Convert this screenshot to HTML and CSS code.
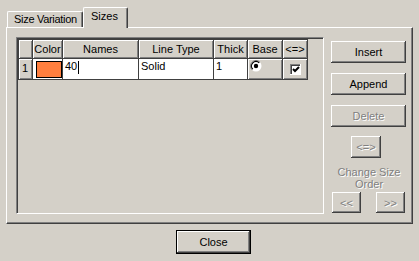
FILE: index.html
```html
<!DOCTYPE html>
<html lang="en">
<head>
    <meta charset="UTF-8">
    <title>Sizes</title>
    <link rel="stylesheet" href="styles.css">
</head>
<body>
    <div class="dialog">
        <div class="tabs">
            <div class="tab">Size Variation</div>
            <div class="tab active">Sizes</div>
        </div>
        <div class="panel">
            <div class="well">
                <div class="grid">
                    <div class="hd"></div>
                    <div class="hd">Color</div>
                    <div class="hd">Names</div>
                    <div class="hd">Line Type</div>
                    <div class="hd">Thick</div>
                    <div class="hd">Base</div>
                    <div class="hd">&lt;=&gt;</div>

                    <div class="hd rowhd">1</div>
                    <div class="cell color"><span class="swatch"></span></div>
                    <div class="cell">40<span class="caret"></span></div>
                    <div class="cell">Solid</div>
                    <div class="cell">1</div>
                    <div class="hd base">
                        <svg width="12" height="12" viewBox="0 0 12 12">
                            <circle cx="6" cy="6" r="5.5" fill="#fff"/>
                            <path d="M2.1 9.9 A5.5 5.5 0 0 1 9.9 2.1" fill="none" stroke="#808080" stroke-width="1"/>
                            <path d="M2.8 9.2 A4.5 4.5 0 0 1 9.2 2.8" fill="none" stroke="#000" stroke-width="1.2"/>
                            <circle cx="6" cy="6" r="2.2" fill="#000"/>
                        </svg>
                    </div>
                    <div class="hd order">
                        <svg width="11" height="11" viewBox="0 0 11 11">
                            <rect x="0" y="0" width="11" height="11" fill="#fff"/>
                            <rect x="0" y="0" width="10" height="10" fill="#808080"/>
                            <rect x="1" y="1" width="9" height="9" fill="#404040"/>
                            <rect x="2" y="2" width="8" height="8" fill="#fff"/>
                            <path d="M3 5 L5 7 L9 3" fill="none" stroke="#000" stroke-width="2"/>
                        </svg>
                    </div>
                </div>
            </div>
            <div class="side">
                <button class="btn wide">Insert</button>
                <button class="btn wide">Append</button>
                <button class="btn wide off">Delete</button>
                <button class="btn swap off">&lt;=&gt;</button>
                <div class="hint">Change Size<br>Order</div>
                <div class="arrows">
                    <button class="btn small off">&lt;&lt;</button>
                    <button class="btn small off">&gt;&gt;</button>
                </div>
            </div>
        </div>
        <div class="footer">
            <button class="btn close">Close</button>
        </div>
    </div>
</body>
</html>
```

FILE: styles.css
```css
body {
    margin: 0;
    background: #d4d0c8;
    font: 11px "Liberation Sans", Arial, sans-serif;
    color: #000;
}
.dialog {
    width: 419px;
    height: 261px;
    box-sizing: border-box;
    padding: 7px 0 0 6px;
}

/* tab strip */
.tabs {
    display: flex;
    align-items: flex-end;
    height: 20px;
    padding-left: 1px;
    position: relative;
    z-index: 1;
}
.tab {
    box-sizing: border-box;
    height: 16px;
    width: 76px;
    padding: 1px 0 0 6px;
    line-height: 13px;
    letter-spacing: -0.3px;
    white-space: nowrap;
    border-top: 1px solid #fff;
    border-left: 1px solid #fff;
    border-right: 1px solid #404040;
    box-shadow: inset -1px 0 #808080;
    border-radius: 2px 2px 0 0;
}
.tab.active {
    width: 45px;
    height: 21px;
    margin-bottom: -1px;
    padding: 2px 0 0 7px;
    letter-spacing: 0;
    background: #d4d0c8;
}

.panel {
    display: flex;
    width: 407px;
    height: 197px;
    box-sizing: border-box;
    padding: 9px 0 0 9px;
    border-top: 1px solid #fff;
    border-left: 1px solid #fff;
    border-right: 1px solid #404040;
    border-bottom: 1px solid #404040;
    box-shadow: inset -1px -1px #808080;
}

/* sunken grid area */
.well {
    width: 308px;
    height: 177px;
    box-sizing: border-box;
    border: 1px solid;
    border-color: #808080 #fff #fff #808080;
    box-shadow: inset 1px 1px #404040;
    padding: 1px 0 0 1px;
}
.grid {
    display: grid;
    width: max-content;
    grid-template-columns: 13px 29px 75px 74px 33px 34px 24px;
    grid-template-rows: 18px 20px;
    gap: 1px;
    padding: 1px;
    background: #404040;
}
.hd {
    background: #d4d0c8;
    box-shadow: inset 1px 1px #fff, inset -1px -1px #808080;
    text-align: center;
    line-height: 18px;
    white-space: nowrap;
}
.rowhd {
    text-align: left;
    padding-left: 3px;
    line-height: 19px;
}
.cell {
    background: #fff;
    padding-left: 2px;
    line-height: 14px;
    display: flex;
    align-items: flex-start;
}
.color {
    padding: 2px 0 0 3px;
}
.swatch {
    width: 26px;
    height: 17px;
    box-sizing: border-box;
    background: #ff7f3f;
    border: 1px solid #000;
}
.caret {
    display: inline-block;
    width: 1px;
    height: 13px;
    margin: 2px 0 0 1px;
    background: #000;
}
.base {
    text-align: left;
    padding: 1px 0 0 2px;
    line-height: 0;
}
.order {
    display: flex;
    align-items: center;
    justify-content: center;
}

/* buttons */
.side {
    display: flex;
    flex-direction: column;
    width: 75px;
    margin-left: 7px;
    padding-top: 4px;
}
.btn {
    font: inherit;
    color: #000;
    background: #d4d0c8;
    border: none;
    padding: 0;
    box-shadow: inset -1px -1px #404040, inset 1px 1px #fff, inset -2px -2px #808080, inset 2px 2px #d4d0c8;
}
.btn.off {
    color: #808080;
    text-shadow: 1px 1px #fff;
}
.wide {
    width: 75px;
    height: 22px;
    margin-bottom: 10px;
}
.wide.off {
    margin-bottom: 9px;
}
.swap {
    width: 30px;
    height: 22px;
    margin-left: 20px;
}
.hint {
    margin-top: 8px;
    text-align: center;
    line-height: 12px;
    color: #808080;
    text-shadow: 1px 1px #fff;
    padding-left: 1px;
}
.arrows {
    display: flex;
    justify-content: space-between;
    padding: 0 1px;
    margin-top: 2px;
}
.small {
    width: 29px;
    height: 21px;
}

.footer {
    display: flex;
    padding-left: 170px;
    margin-top: 6px;
}
.close {
    width: 75px;
    height: 24px;
    border: 1px solid #000;
}
```
